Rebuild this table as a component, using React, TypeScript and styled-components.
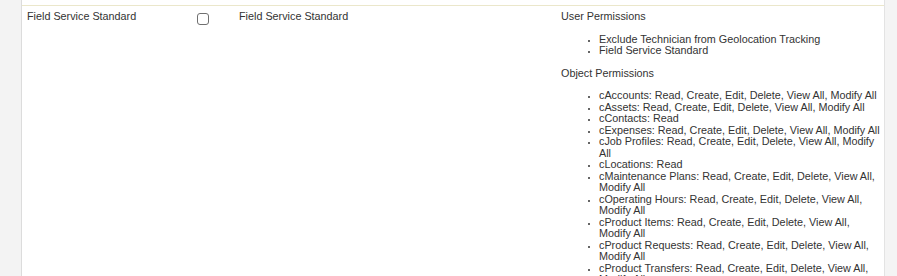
import React from 'react';
import styled, { createGlobalStyle } from 'styled-components';

const GlobalStyle = createGlobalStyle`
  html, body {
    margin: 0;
    padding: 0;
    background: #fff;
    overflow: hidden;
  }
  body {
    font-family: "Liberation Sans", Arial, Helvetica, sans-serif;
    font-size: 10.8px;
    color: #333;
  }
`;

const Frame = styled.div`
  display: flex;
  height: 276px;
  overflow: hidden;
`;

const SideRail = styled.div`
  width: 21px;
  flex: none;
  background: #f3f3f3;
  border-right: 1px solid #dcdcdc;
`;

const ScrollTrack = styled.div`
  width: 12px;
  flex: none;
  background: #f4f4f4;
  border-left: 1px solid #e3e3e3;
`;

const Content = styled.div`
  flex: 1;
  min-width: 0;
  padding-top: 5px;
`;

const Row = styled.div`
  display: grid;
  grid-template-columns: 170px 42px 322px 1fr;
  border-top: 1px solid #ebe7cb;
`;

const Cell = styled.div<{ $padRight?: number }>`
  padding: 5px ${(p) => p.$padRight ?? 5}px 5px 5px;
  line-height: 11.5px;
  min-width: 0;
`;

const Check = styled.input.attrs({ type: 'checkbox' })`
  appearance: none;
  display: block;
  width: 12px;
  height: 12px;
  margin: 2px 0 0 0;
  border: 1px solid #707070;
  border-radius: 3px;
  background: #fff;
  box-sizing: border-box;
`;

const Heading = styled.div`
  margin: 0;
`;

const PermList = styled.ul`
  margin: 11px 0;
  padding-left: 38px;
  list-style: disc;

  li::marker {
    font-size: 8px;
  }
`;

const userPermissions = [
  'Exclude Technician from Geolocation Tracking',
  'Field Service Standard',
];

const objectPermissions = [
  'cAccounts: Read, Create, Edit, Delete, View All, Modify All',
  'cAssets: Read, Create, Edit, Delete, View All, Modify All',
  'cContacts: Read',
  'cExpenses: Read, Create, Edit, Delete, View All, Modify All',
  'cJob Profiles: Read, Create, Edit, Delete, View All, Modify All',
  'cLocations: Read',
  'cMaintenance Plans: Read, Create, Edit, Delete, View All, Modify All',
  'cOperating Hours: Read, Create, Edit, Delete, View All, Modify All',
  'cProduct Items: Read, Create, Edit, Delete, View All, Modify All',
  'cProduct Requests: Read, Create, Edit, Delete, View All, Modify All',
  'cProduct Transfers: Read, Create, Edit, Delete, View All, Modify All',
  'cProducts: Read, Create, Edit, Delete, View All, Modify All',
];

export default function App() {
  return (
    <>
      <GlobalStyle />
      <Frame>
        <SideRail />
        <Content>
          <Row>
            <Cell>Field Service Standard</Cell>
            <Cell>
              <Check readOnly />
            </Cell>
            <Cell>Field Service Standard</Cell>
            <Cell $padRight={0}>
              <Heading>User Permissions</Heading>
              <PermList>
                {userPermissions.map((p) => (
                  <li key={p}>{p}</li>
                ))}
              </PermList>
              <Heading>Object Permissions</Heading>
              <PermList>
                {objectPermissions.map((p) => (
                  <li key={p}>{p}</li>
                ))}
              </PermList>
            </Cell>
          </Row>
        </Content>
        <ScrollTrack />
      </Frame>
    </>
  );
}
